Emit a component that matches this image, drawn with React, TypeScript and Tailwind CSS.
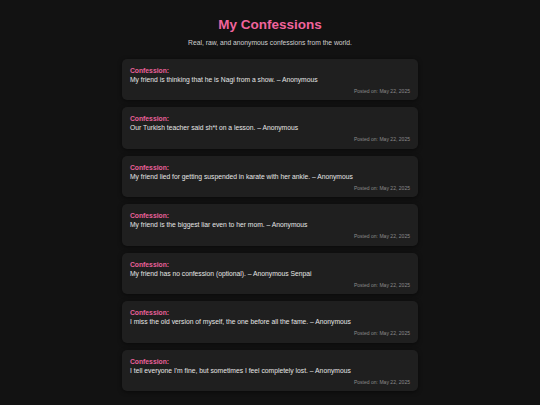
const confessions = [
  'My friend is thinking that he is Nagi from a show. – Anonymous',
  'Our Turkish teacher said sh*t on a lesson. – Anonymous',
  'My friend lied for getting suspended in karate with her ankle. – Anonymous',
  'My friend is the biggest liar even to her mom. – Anonymous',
  'My friend has no confession (optional). – Anonymous Senpai',
  'I miss the old version of myself, the one before all the fame. – Anonymous',
  "I tell everyone I'm fine, but sometimes I feel completely lost. – Anonymous",
];

function ConfessionCard({ text }: { text: string }) {
  return (
    <div className="rounded-[5px] bg-[#1f1f1f] px-[8px] pt-[6.7px] pb-[5.8px] shadow-[0_1px_4px_rgba(0,0,0,0.5)]">
      <div className="text-[6.75px] leading-[9px] font-bold text-[#e9619a]">Confession:</div>
      <p className="text-[6.75px] leading-[10px] text-[#e6e6e6]">{text}</p>
      <div className="mt-[2px] text-right text-[5.06px] leading-[8px] text-[#8a8a8a]">Posted on: May 22, 2025</div>
    </div>
  );
}

export default function App() {
  return (
    <div className="min-h-screen bg-[#121212] pt-[16.8px] pb-[12px] font-['Liberation_Sans',Arial,sans-serif]">
      <h1 className="text-center text-[13.5px] leading-[16px] font-bold text-[#f0649c]">My Confessions</h1>
      <p className="mt-[5.4px] text-center text-[6.75px] leading-[9px] text-[#cfcfcf]">
        Real, raw, and anonymous confessions from the world.
      </p>
      <div className="mx-auto mt-[11.8px] flex w-[296px] flex-col gap-[7px]">
        {confessions.map((c, i) => (
          <ConfessionCard key={i} text={c} />
        ))}
      </div>
    </div>
  );
}
